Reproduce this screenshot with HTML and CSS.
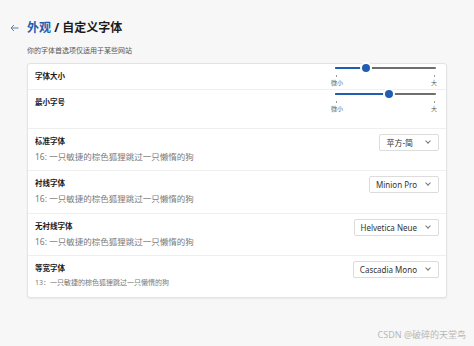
FILE: index.html
```html
<!DOCTYPE html>
<html lang="zh-CN">
<head>
    <meta charset="UTF-8">
    <meta name="viewport" content="width=device-width, initial-scale=1.0">
    <title>外观 / 自定义字体</title>
    <link rel="stylesheet" href="styles.css">
</head>
<body>
    <div class="page">
        <div class="header">
            <svg class="back" viewBox="0 0 9 8" fill="none" stroke="#5b7fa8" stroke-width="1">
                <path d="M8.5 4H1M4 1L1 4l3 3"></path>
            </svg>
            <h1 class="title"><span class="crumb">外观</span> / 自定义字体</h1>
        </div>
        <div class="subtitle">你的字体首选项仅适用于某些网站</div>

        <div class="card">
            <div class="row row-size">
                <div class="label">字体大小</div>
                <div class="slider">
                    <div class="track">
                        <div class="fill" style="width: 31%"></div>
                        <div class="thumb" style="left: 31%"></div>
                    </div>
                    <div class="ticks"><span></span><span></span></div>
                    <div class="scale"><span>微小</span><span>大</span></div>
                </div>
            </div>
            <div class="row row-min">
                <div class="label">最小字号</div>
                <div class="slider">
                    <div class="track">
                        <div class="fill" style="width: 53%"></div>
                        <div class="thumb" style="left: 53%"></div>
                    </div>
                    <div class="ticks"><span></span><span></span></div>
                    <div class="scale"><span>微小</span><span>大</span></div>
                </div>
            </div>
            <div class="row font-row">
                <div class="info">
                    <div class="label">标准字体</div>
                    <div class="sample">16: 一只敏捷的棕色狐狸跳过一只懒惰的狗</div>
                </div>
                <div class="select select-wide">苹方-简 <span class="chev"></span></div>
            </div>
            <div class="row font-row tall">
                <div class="info">
                    <div class="label">衬线字体</div>
                    <div class="sample">16: 一只敏捷的棕色狐狸跳过一只懒惰的狗</div>
                </div>
                <div class="select">Minion Pro <span class="chev"></span></div>
            </div>
            <div class="row font-row">
                <div class="info">
                    <div class="label">无衬线字体</div>
                    <div class="sample">16: 一只敏捷的棕色狐狸跳过一只懒惰的狗</div>
                </div>
                <div class="select">Helvetica Neue <span class="chev"></span></div>
            </div>
            <div class="row font-row last">
                <div class="info">
                    <div class="label">等宽字体</div>
                    <div class="sample small">13：一只敏捷的棕色狐狸跳过一只懒惰的狗</div>
                </div>
                <div class="select">Cascadia Mono <span class="chev"></span></div>
            </div>
        </div>

        <div class="watermark">CSDN @破碎的天堂鸟</div>
    </div>
</body>
</html>
```

FILE: styles.css
```css
* {
    margin: 0;
    padding: 0;
    box-sizing: border-box;
    font-family: 'Noto Sans', 'Noto Sans CJK SC', sans-serif;
}

body {
    background-color: #f7f7f7;
    color: #1b1b1b;
}

.page {
    padding: 20px 27px 0 27px;
}

.header {
    display: flex;
    align-items: center;
    gap: 8px;
    margin-left: -17px;
}

.back {
    width: 9px;
    height: 8px;
}

.title {
    font-size: 12px;
    line-height: 16px;
    font-weight: bold;
    color: #1b1b1b;
}

.crumb {
    color: #1f5eb0;
}

.subtitle {
    margin-top: 10px;
    font-size: 7px;
    line-height: 10px;
    color: #555;
}

.card {
    margin-top: 7px;
    background-color: #fff;
    border: 1px solid #e3e3e3;
    border-radius: 3px;
    box-shadow: 0 1px 2px rgba(0, 0, 0, 0.06);
}

.row {
    display: flex;
    align-items: flex-start;
    justify-content: space-between;
    padding: 0 7px;
    border-bottom: 1px solid #efefef;
}

.row-size {
    height: 26px;
}

.row-min {
    height: 39px;
}

.font-row {
    height: 42px;
}

.font-row.tall {
    height: 43px;
}

.font-row.last {
    height: 41px;
    border-bottom: none;
}

.label {
    margin-top: 7px;
    font-size: 7.5px;
    line-height: 10px;
    font-weight: bold;
}

.sample {
    margin-top: 5px;
    font-size: 8.5px;
    line-height: 12px;
    color: #7a7a7a;
}

.sample.small {
    font-size: 7px;
    line-height: 10px;
    margin-top: 5px;
}

.slider {
    width: 106px;
    margin-right: 2px;
}

.track {
    position: relative;
    height: 7px;
    margin: 0 1px 0 4px;
}

.track::before {
    content: '';
    position: absolute;
    left: 0;
    right: 0;
    top: 2.5px;
    height: 2px;
    background-color: #6e6e6e;
    border-radius: 1px;
}

.fill {
    position: absolute;
    left: 0;
    top: 2.5px;
    height: 2px;
    background-color: #1f5eb0;
    border-radius: 1px;
}

.thumb {
    position: absolute;
    top: -0.5px;
    width: 8px;
    height: 8px;
    margin-left: -4px;
    border-radius: 50%;
    background-color: #1f5eb0;
    box-shadow: 0 0 0 2px #fff;
}

.ticks {
    display: flex;
    justify-content: space-between;
    margin-top: 4px;
    padding: 0 2px 0 5px;
    height: 2px;
}

.ticks span {
    width: 1px;
    height: 2px;
    background-color: #9a9a9a;
}

.scale {
    display: flex;
    justify-content: space-between;
    margin-top: 2px;
    font-size: 6px;
    line-height: 8px;
    color: #555;
}

.select {
    display: flex;
    align-items: center;
    gap: 9px;
    margin-top: 5px;
    height: 17px;
    padding: 0 6px;
    border: 1px solid #dcdcdc;
    border-radius: 2px;
    font-size: 8px;
    color: #333;
    white-space: nowrap;
}

.select-wide {
    gap: 13px;
}

.chev {
    width: 4px;
    height: 4px;
    margin-top: -3px;
    margin-right: 2px;
    border-right: 1px solid #777;
    border-bottom: 1px solid #777;
    transform: rotate(45deg);
}

.watermark {
    margin-top: 31px;
    margin-right: -19px;
    text-align: right;
    font-size: 9px;
    line-height: 12px;
    color: #b8b8b8;
}
```
